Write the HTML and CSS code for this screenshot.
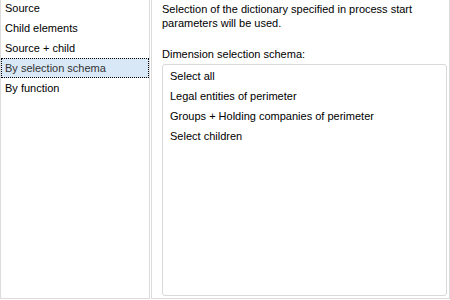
FILE: index.html
```html
<!DOCTYPE html>
<html lang="en">
<head>
  <meta charset="UTF-8">
  <title>Dimension selection</title>
  <link rel="stylesheet" href="styles.css">
</head>
<body>
  <div class="window">
    <ul class="modes">
      <li>Source</li>
      <li>Child elements</li>
      <li>Source + child</li>
      <li class="selected">By selection schema</li>
      <li>By function</li>
    </ul>

    <div class="details">
      <p class="note">Selection of the dictionary specified in process start parameters will be used.</p>
      <label class="caption">Dimension selection schema:</label>
      <ul class="schemas">
        <li>Select all</li>
        <li>Legal entities of perimeter</li>
        <li>Groups + Holding companies of perimeter</li>
        <li>Select children</li>
      </ul>
    </div>
  </div>
</body>
</html>
```

FILE: styles.css
```css
body {
  margin: 0;
  background-color: #ffffff;
  font-family: "Liberation Sans", Arial, sans-serif;
  font-size: 11px;
  color: #000000;
}

.window {
  display: flex;
  gap: 1px;
  height: 299px;
}

ul {
  list-style: none;
  margin: 0;
  padding: 0;
}

.modes {
  width: 148px;
  border: 1px solid #dcdcdc;
  border-top: none;
  padding-top: 0;
}

.modes li {
  height: 20px;
  line-height: 18px;
  padding-left: 3px;
  box-sizing: border-box;
  border: 1px solid transparent;
}

.modes li:first-child {
  margin-top: -2px;
}

.modes li.selected {
  background-color: #d9e8f6;
  border: 1px dotted #000000;
  color: #333333;
}

.details {
  flex: 1;
  border: 1px solid #dcdcdc;
  border-top: none;
  padding: 2px 2px 2px 10px;
  display: flex;
  flex-direction: column;
}

.note {
  margin: 0;
  line-height: 14px;
  padding-right: 20px;
}

.caption {
  display: block;
  margin-top: 17px;
  line-height: 14px;
}

.schemas {
  flex: 1;
  margin-top: 3px;
  border: 1px solid #d9d9d9;
  border-radius: 3px;
  padding-top: 1px;
}

.schemas li {
  height: 20px;
  line-height: 20px;
  padding-left: 7px;
}
```
